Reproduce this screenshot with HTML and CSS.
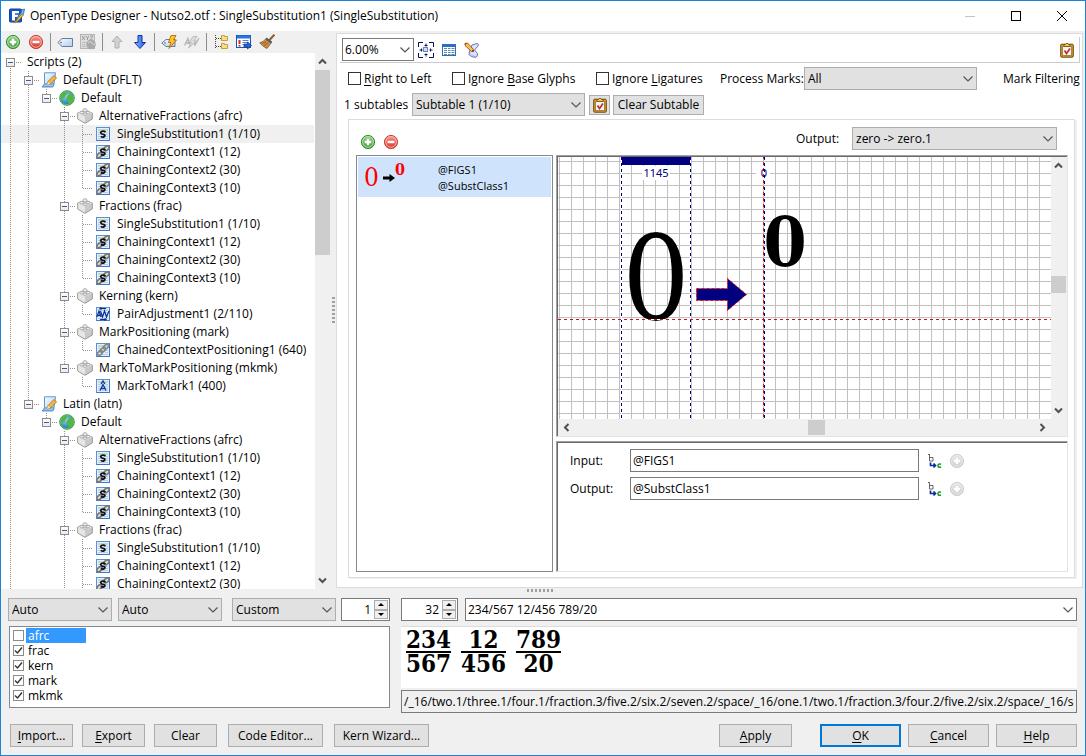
FILE: index.html
```html
<!DOCTYPE html>
<html lang="en">
<head>
<meta charset="utf-8">
<title>OpenType Designer - Nutso2.otf</title>
<link rel="stylesheet" href="styles.css">
</head>
<body>
<svg class="defs" aria-hidden="true">
  <defs>
    <linearGradient id="g-green" x2="0" y2="1"><stop offset="0" stop-color="#9ad48a"/><stop offset="1" stop-color="#3f9a38"/></linearGradient>
    <linearGradient id="g-red" x2="0" y2="1"><stop offset="0" stop-color="#f79a8c"/><stop offset="1" stop-color="#d8342a"/></linearGradient>
    <linearGradient id="g-gray" x2="0" y2="1"><stop offset="0" stop-color="#e6e6e6"/><stop offset="1" stop-color="#cdcdcd"/></linearGradient>
    <linearGradient id="g-blue" x2="1" y2="1"><stop offset="0" stop-color="#fff"/><stop offset="1" stop-color="#a9cdf2"/></linearGradient>
    <linearGradient id="g-arrow" x2="1" y2="0"><stop offset="0" stop-color="#8fc0ff"/><stop offset="1" stop-color="#1d55d8"/></linearGradient>
    <radialGradient id="g-globe" cx=".4" cy=".35"><stop offset="0" stop-color="#9fd8f2"/><stop offset="1" stop-color="#2c86c4"/></radialGradient>
    <symbol id="i-add" viewBox="0 0 16 16"><circle cx="8" cy="8" r="6.6" fill="url(#g-green)" stroke="#3c8c36"/><circle cx="8" cy="8" r="5.3" fill="none" stroke="#c6e8bd" stroke-width=".8"/><path d="M8 4.8v6.4M4.8 8h6.4" stroke="#fff" stroke-width="2.4"/></symbol>
    <symbol id="i-del" viewBox="0 0 16 16"><circle cx="8" cy="8" r="6.6" fill="url(#g-red)" stroke="#cc4137"/><circle cx="8" cy="8" r="5.3" fill="none" stroke="#fac6be" stroke-width=".8"/><path d="M4.6 8h6.8" stroke="#fff" stroke-width="2.4"/></symbol>
    <symbol id="i-add-off" viewBox="0 0 16 16"><circle cx="8" cy="8" r="6.6" fill="url(#g-gray)" stroke="#cfcfcf"/><circle cx="8" cy="8" r="5.3" fill="none" stroke="#eee" stroke-width=".8"/><path d="M8 4.8v6.4M4.8 8h6.4" stroke="#fff" stroke-width="2.4"/></symbol>
    <symbol id="i-tag" viewBox="0 0 16 16"><path d="M5 4.5h10.5v8H5L.8 8.5z" fill="url(#g-blue)" stroke="#6a7c99"/><circle cx="4" cy="8.5" r=".8" fill="#555"/></symbol>
    <symbol id="i-xyz" viewBox="0 0 16 16"><rect x=".5" y=".5" width="14" height="14" fill="#ddd" stroke="#b4b4b4"/><path d="M2 2l3 4M5 2L2 6M6 2l1.500 2L9 2M7.500 4v2M10 2h3l-3 4h3" fill="none" stroke="#999" stroke-width=".9"/><path d="M2 8.500h4M2 10.500h3M2 12.500h4" stroke="#bbb"/><circle cx="11" cy="10.500" r="4.800" fill="#aaa"/><path d="M8 9q3-3 4 0t3 1" stroke="#ddd" fill="none"/></symbol>
    <symbol id="i-up" viewBox="0 0 16 16"><path d="M8 2l5 5.500h-3V14H6V7.500H3z" fill="#d2d2d2" stroke="#b2b2b2"/></symbol>
    <symbol id="i-down" viewBox="0 0 16 16"><path d="M8 14.500L2.500 8.500H6V1.500h4v7h3.500z" fill="url(#g-arrow)" stroke="#0c35a4"/></symbol>
    <symbol id="i-tagbolt" viewBox="0 0 16 16"><path d="M5 5.500h9v7H5L.8 9z" fill="url(#g-blue)" stroke="#6a7c99"/><circle cx="4" cy="9" r=".8" fill="#555"/><path d="M10 1.500h5L12.500 6h3L8 14.500l2-6H7.500z" fill="#ffc62e" stroke="#b76a00" stroke-width=".9"/></symbol>
    <symbol id="i-avbolt" viewBox="0 0 16 16"><path d="M.6 11.500L4 4.500l1.500 6M2 9h4M9 4l2 7 4-7" fill="none" stroke="#b4b4b4" stroke-width="1.300"/><path d="M9 2.500h4L10 7h2.500L4.500 14l3-5.500H5z" fill="#ddd" stroke="#b0b0b0" stroke-width=".8"/></symbol>
    <symbol id="i-hier" viewBox="0 0 16 16"><path d="M2.500 1v13M3 4.500h5M3 12.500h5" stroke="#444" stroke-dasharray="1 1"/><path d="M8.500 1.500h3v1h3v4h-6zM8.500 9.500h3v1h3v4h-6z" fill="#f7dc8a" stroke="#c49d3e"/></symbol>
    <symbol id="i-report" viewBox="0 0 16 16"><rect x=".5" y="1.500" width="14" height="12" fill="#fff" stroke="#1555b4"/><path d="M1 3h13.500" stroke="#2874e0" stroke-width="3"/><path d="M3.500 6v4M3.500 11v1.500" stroke="#e02a1b" stroke-width="2"/><path d="M6.500 6.500h6M6.500 8.500h6M6.500 10.500h3" stroke="#4a85d8"/><path d="M8 10h3.500V8l4 3.500-4 3.500v-2H8z" fill="#2b61d6" stroke="#0b3490" stroke-width=".7"/></symbol>
    <symbol id="i-broom" viewBox="0 0 16 16"><path d="M15.300.7L10.500 6" stroke="#9a5a1c" stroke-width="2"/><path d="M7 4.500l5.500 4-4.500 6Q4 13 .7 8.800 5 8 7 4.500z" fill="#c98d43" stroke="#8a5620" stroke-width=".8"/><path d="M7 4.500l5.500 4" stroke="#57606a" stroke-width="2.200"/><path d="M3 9.500l4-1.500M5 11.500L9 9" stroke="#8a5620" stroke-width=".8"/></symbol>
    <symbol id="i-script" viewBox="0 0 16 16"><path d="M3.500.8h11l-1.500 11-1 3H1q2-1 2.500-3z" fill="url(#g-blue)" stroke="#5b96d8"/><path d="M1 14.800h10.500q1.500-1 1.500-3H3.500q-.5 2-2.500 3z" fill="#9cc7f4" stroke="#4a85cc" stroke-width=".8"/><path d="M6 13l1-3.500 6-6 2.500 2.500-6 6z" fill="#f5b646" stroke="#a6691a" stroke-width=".8"/><path d="M6 13l1-3.200 2.300 2.300z" fill="#f6e2c0"/></symbol>
    <symbol id="i-globe" viewBox="0 0 16 16"><circle cx="8" cy="8" r="7.300" fill="url(#g-globe)" stroke="#3b9b42"/><path d="M2 5q2-4 6-3.500 1 2-1 3.500L5.500 8 3 8.500 1.500 11Q.5 8 2 5zM9.500 5l4-1.500q1.800 3 1.200 6L12 13l-2.500 1.500L9 11 7 9l1-2z" fill="#52b548"/><circle cx="8" cy="8" r="6.600" fill="none" stroke="#62ba5c"/></symbol>
    <symbol id="i-brick" viewBox="0 0 16 16"><path d="M.7 5l7-2.500L15.300 5v6L8 15.300.7 11z" fill="#c9c9c9" stroke="#999"/><path d="M1.200 5.500L8 8.500v6L1.200 10.800z" fill="#e6e6e6"/><path d="M1 5l7-2.500L15 5 8 8.300z" fill="#f8f8f8"/><ellipse cx="4.800" cy="4.600" rx="2" ry="1.300" fill="#eee" stroke="#999" stroke-width=".8"/><ellipse cx="11" cy="4.600" rx="2" ry="1.300" fill="#eee" stroke="#999" stroke-width=".8"/><ellipse cx="8" cy="6.200" rx="2" ry="1.200" fill="#eee" stroke="#999" stroke-width=".8"/><path d="M6 2.200q0-1.500 2-1.500t2 1.500v1.500H6z" fill="#eee" stroke="#999" stroke-width=".8"/></symbol>
    <symbol id="i-page" viewBox="0 0 14 14"><rect x=".5" y=".5" width="13" height="13" fill="#e3effd" stroke="#5f8fd0"/><path d="M2 3h10" stroke="#9bc88e" stroke-width="1"/><path d="M2 5.500h3M2 7.500h3M2 9.500h3M9 5.500h3M9 7.500h3M9 9.500h3M2 11.500h10" stroke="#b5cdea"/><path d="M.5 13.500h13V.500" fill="none" stroke="#3f78c2"/></symbol>
    <symbol id="i-sub" viewBox="0 0 14 14"><use href="#i-page"/><path d="M9.500 5Q7.500 3.500 5.500 4.500T6 7l2 .6q2 1-.2 2.300-1.500.6-3-.6" fill="none" stroke="#111" stroke-width="1.700"/></symbol>
    <symbol id="i-chain" viewBox="0 0 14 14"><use href="#i-page"/><g fill="#ddd" stroke="#777" stroke-width="1.700"><ellipse cx="10.500" cy="3.400" rx="3" ry="1.900" transform="rotate(-40 10.500 3.400)"/><ellipse cx="3.500" cy="10.300" rx="3" ry="1.900" transform="rotate(-40 3.500 10.300)"/></g><path d="M9.500 5Q7.500 3.500 5.500 4.500T6 7l2 .6q2 1-.2 2.300-1.500.6-3-.6" fill="none" stroke="#111" stroke-width="1.700"/></symbol>
    <symbol id="i-chainpos" viewBox="0 0 14 14"><use href="#i-page"/><g fill="none" stroke="#858585" stroke-width="1.600"><ellipse cx="10" cy="3.800" rx="3" ry="1.800" transform="rotate(-42 10 3.800)"/><ellipse cx="7" cy="6.800" rx="3" ry="1.800" transform="rotate(-42 7 6.800)"/><ellipse cx="4" cy="10" rx="3" ry="1.800" transform="rotate(-42 4 10)"/></g></symbol>
    <symbol id="i-pair" viewBox="0 0 14 14"><use href="#i-page"/><path d="M.8 10L3 4l2 6M1.500 8.300h3M4.500 4l2 6 2-6 2 6 2.500-6M4 1.500h6M5.500.500L4 1.500l1.500 1M4 12.500h6M8.500 11.500l1.500 1-1.500 1" fill="none" stroke="#0b2f9c" stroke-width="1.200"/></symbol>
    <symbol id="i-mkmk" viewBox="0 0 14 14"><use href="#i-page"/><path d="M5 5l2-3 2 3M4 11.500L7 5.500l3 6M5 9.500h4" fill="none" stroke="#12358e" stroke-width="1.300"/></symbol>
    <symbol id="i-fit" viewBox="0 0 16 16"><path d="M.5 5V.500H5M11 .5h4.500V5M15.500 11v4.500H11M5 15.500H.500V11" fill="none" stroke="#0b0b54"/><rect x="5.500" y="5.500" width="4" height="4" fill="#cfdff2" stroke="#7088a8"/><path d="M8 1.500v3M8 11.500v3M1.500 8h3M11.500 8h3M6.500 3.500h3M6.500 12.500h3M3.500 6.500v3M12.500 6.500v3" stroke="#0c0c80"/></symbol>
    <symbol id="i-table" viewBox="0 0 16 16"><rect x="1.500" y="2.500" width="13" height="11" fill="#fff" stroke="#2e6db4"/><path d="M1 3.500h14" stroke="#2a6fc4" stroke-width="3"/><path d="M3 6.500h3M7 6.500h2.500M10.500 6.500h3M3 8.500h3M7 8.500h2.500M10.500 8.500h3M3 10.500h3M7 10.500h2.500M10.500 10.500h3M3 12.500h3M7 12.500h2.500M10.500 12.500h3" stroke="#5b86a8"/></symbol>
    <symbol id="i-edit" viewBox="0 0 16 16"><path d="M8 3l5-1.500q2.500.5 1 2.500l-3.500 4 3 3.500q.5 3.500-2 3.800L5 11l1-3z" fill="#dfe2fa" stroke="#6f74c4"/><path d="M6 10.500q-2.500 2 .5 3.500t5 1.200" fill="#cfd3f2" stroke="#6f74c4"/><path d="M1 1.500l2.500-.5 6 6.500-2 2-6.500-6z" fill="#f8c63c" stroke="#8d3b12" stroke-width=".8"/><path d="M.8 1l2 .2L1.500 3z" fill="#c01818"/><path d="M7.500 9.500l2-2 .5 2.500z" fill="#333"/></symbol>
    <symbol id="i-clip" viewBox="0 0 16 16"><rect x="1.700" y="2.200" width="12.600" height="13" rx="1" fill="#d79b25" stroke="#6e4a08"/><path d="M3.500 4.500h9v9h-9z" fill="#eef3fc" stroke="#8a6a2a" stroke-width=".7"/><path d="M5 4.500V2.500h1.500Q8-.5 9.500 2.500H11v2z" fill="#f0cc58" stroke="#6e4a08" stroke-width=".8"/><path d="M5.500 8.500l2 3 3.500-5" fill="none" stroke="#d1261a" stroke-width="1.600"/></symbol>
    <symbol id="i-bc" viewBox="0 0 14 16"><path d="M0 1.500h2M1.500 1v7M1.500 4.500h3.500v3.500H1.500" fill="none" stroke="#666"/><path d="M2.500 9.500v3H7M5.500 10.500l2 2-2 2" fill="none" stroke="#0a2ea0" stroke-width="1.700"/><path d="M13 11.300q-3-1-3 1.400t3 1.300" fill="none" stroke="#149a1e" stroke-width="1.500"/></symbol>
    <symbol id="i-app" viewBox="0 0 16 16"><rect x=".5" y="1" width="12" height="13" rx="1" fill="#1756c8" stroke="#0f3f98"/><path d="M3 3h7v2.300H6v1.500h3.300V9H6v3.500H3z" fill="#fff"/><path d="M15.500 1l-1 5-5 5-2 .500.500-2 4-4.500.500-3z" fill="#73b8f0" stroke="#1c67ad" stroke-width=".8"/><path d="M9 10l4-4 1.500 1L10 12q-4 4-6 2.500Q8 13 9 10z" fill="#f0c33a" stroke="#8b6710" stroke-width=".7"/></symbol>
    <symbol id="a-up" viewBox="0 0 9 9"><path d="M1 6.500L4.500 3 8 6.500" fill="none" stroke="#505050" stroke-width="2"/></symbol>
    <symbol id="a-down" viewBox="0 0 9 9"><path d="M1 2.500L4.500 6 8 2.500" fill="none" stroke="#505050" stroke-width="2"/></symbol>
    <symbol id="a-left" viewBox="0 0 9 9"><path d="M6.500 1L3 4.500 6.500 8" fill="none" stroke="#505050" stroke-width="2"/></symbol>
    <symbol id="a-right" viewBox="0 0 9 9"><path d="M2.500 1L6 4.500 2.500 8" fill="none" stroke="#505050" stroke-width="2"/></symbol>
  </defs>
</svg>

<div class="window">
  <header class="titlebar">
    <svg class="icon"><use href="#i-app"/></svg>
    <span class="title">OpenType Designer - Nutso2.otf : SingleSubstitution1 (SingleSubstitution)</span>
    <button class="caption" aria-label="Minimize" disabled><svg viewBox="0 0 12 12"><path d="M1 6.500h10" stroke="#c4c4c4"/></svg></button>
    <button class="caption" aria-label="Maximize"><svg viewBox="0 0 12 12"><rect x="1.500" y="1.500" width="9" height="9" fill="none" stroke="#000"/></svg></button>
    <button class="caption" aria-label="Close"><svg viewBox="0 0 12 12"><path d="M1 1l10 10M11 1L1 11" stroke="#000"/></svg></button>
  </header>

  <main class="workspace">
    <section class="sidebar">
      <div class="toolbar">
        <button class="tool" aria-label="Add"><svg class="icon"><use href="#i-add"/></svg></button>
        <button class="tool" aria-label="Remove"><svg class="icon"><use href="#i-del"/></svg></button>
        <span class="sep"></span>
        <button class="tool" aria-label="Tag"><svg class="icon"><use href="#i-tag"/></svg></button>
        <button class="tool" aria-label="Rename" disabled><svg class="icon"><use href="#i-xyz"/></svg></button>
        <span class="sep"></span>
        <button class="tool" aria-label="Move up" disabled><svg class="icon"><use href="#i-up"/></svg></button>
        <button class="tool" aria-label="Move down"><svg class="icon"><use href="#i-down"/></svg></button>
        <span class="sep"></span>
        <button class="tool" aria-label="Auto features"><svg class="icon"><use href="#i-tagbolt"/></svg></button>
        <button class="tool" aria-label="Auto kerning" disabled><svg class="icon"><use href="#i-avbolt"/></svg></button>
        <span class="sep"></span>
        <button class="tool" aria-label="Expand tree"><svg class="icon"><use href="#i-hier"/></svg></button>
        <button class="tool" aria-label="Report"><svg class="icon"><use href="#i-report"/></svg></button>
        <button class="tool" aria-label="Clean up"><svg class="icon"><use href="#i-broom"/></svg></button>
      </div>
      <div class="tree-area">
        <ul class="tree">
          <li><div class="row root"><i class="box"></i>Scripts (2)</div>
            <ul>
              <li><div class="row"><i class="box"></i><svg class="icon"><use href="#i-script"/></svg>Default (DFLT)</div>
                <ul>
                  <li><div class="row"><i class="box"></i><svg class="icon"><use href="#i-globe"/></svg>Default</div>
                    <ul>
                      <li><div class="row"><i class="box"></i><svg class="icon"><use href="#i-brick"/></svg>AlternativeFractions (afrc)</div>
                        <ul>
                          <li><div class="row leaf selected"><svg class="icon small"><use href="#i-sub"/></svg>SingleSubstitution1 (1/10)</div></li>
                          <li><div class="row leaf"><svg class="icon small"><use href="#i-chain"/></svg>ChainingContext1 (12)</div></li>
                          <li><div class="row leaf"><svg class="icon small"><use href="#i-chain"/></svg>ChainingContext2 (30)</div></li>
                          <li><div class="row leaf"><svg class="icon small"><use href="#i-chain"/></svg>ChainingContext3 (10)</div></li>
                        </ul>
                      </li>
                      <li><div class="row"><i class="box"></i><svg class="icon"><use href="#i-brick"/></svg>Fractions (frac)</div>
                        <ul>
                          <li><div class="row leaf"><svg class="icon small"><use href="#i-sub"/></svg>SingleSubstitution1 (1/10)</div></li>
                          <li><div class="row leaf"><svg class="icon small"><use href="#i-chain"/></svg>ChainingContext1 (12)</div></li>
                          <li><div class="row leaf"><svg class="icon small"><use href="#i-chain"/></svg>ChainingContext2 (30)</div></li>
                          <li><div class="row leaf"><svg class="icon small"><use href="#i-chain"/></svg>ChainingContext3 (10)</div></li>
                        </ul>
                      </li>
                      <li><div class="row"><i class="box"></i><svg class="icon"><use href="#i-brick"/></svg>Kerning (kern)</div>
                        <ul>
                          <li><div class="row leaf"><svg class="icon small"><use href="#i-pair"/></svg>PairAdjustment1 (2/110)</div></li>
                        </ul>
                      </li>
                      <li><div class="row"><i class="box"></i><svg class="icon"><use href="#i-brick"/></svg>MarkPositioning (mark)</div>
                        <ul>
                          <li><div class="row leaf"><svg class="icon small"><use href="#i-chainpos"/></svg>ChainedContextPositioning1 (640)</div></li>
                        </ul>
                      </li>
                      <li><div class="row"><i class="box"></i><svg class="icon"><use href="#i-brick"/></svg>MarkToMarkPositioning (mkmk)</div>
                        <ul>
                          <li><div class="row leaf"><svg class="icon small"><use href="#i-mkmk"/></svg>MarkToMark1 (400)</div></li>
                        </ul>
                      </li>
                    </ul>
                  </li>
                </ul>
              </li>
              <li><div class="row"><i class="box"></i><svg class="icon"><use href="#i-script"/></svg>Latin (latn)</div>
                <ul>
                  <li><div class="row"><i class="box"></i><svg class="icon"><use href="#i-globe"/></svg>Default</div>
                    <ul>
                      <li><div class="row"><i class="box"></i><svg class="icon"><use href="#i-brick"/></svg>AlternativeFractions (afrc)</div>
                        <ul>
                          <li><div class="row leaf"><svg class="icon small"><use href="#i-sub"/></svg>SingleSubstitution1 (1/10)</div></li>
                          <li><div class="row leaf"><svg class="icon small"><use href="#i-chain"/></svg>ChainingContext1 (12)</div></li>
                          <li><div class="row leaf"><svg class="icon small"><use href="#i-chain"/></svg>ChainingContext2 (30)</div></li>
                          <li><div class="row leaf"><svg class="icon small"><use href="#i-chain"/></svg>ChainingContext3 (10)</div></li>
                        </ul>
                      </li>
                      <li class="more"><div class="row"><i class="box"></i><svg class="icon"><use href="#i-brick"/></svg>Fractions (frac)</div>
                        <ul>
                          <li><div class="row leaf"><svg class="icon small"><use href="#i-sub"/></svg>SingleSubstitution1 (1/10)</div></li>
                          <li><div class="row leaf"><svg class="icon small"><use href="#i-chain"/></svg>ChainingContext1 (12)</div></li>
                          <li class="more"><div class="row leaf"><svg class="icon small"><use href="#i-chain"/></svg>ChainingContext2 (30)</div></li>
                        </ul>
                      </li>
                    </ul>
                  </li>
                </ul>
              </li>
            </ul>
          </li>
        </ul>
        <div class="scroll vertical tree-scroll">
          <svg class="arrow"><use href="#a-up"/></svg><i class="thumb"></i><i class="after"></i><svg class="arrow"><use href="#a-down"/></svg>
        </div>
      </div>
    </section>
    <div class="splitter-v"><i class="grip"></i></div>

    <section class="editor">
      <div class="editor-bar">
        <select class="field zoom" aria-label="Zoom"><option>6.00%</option></select>
        <button class="tool" aria-label="Zoom to fit"><svg class="icon"><use href="#i-fit"/></svg></button>
        <button class="tool" aria-label="Table"><svg class="icon"><use href="#i-table"/></svg></button>
        <button class="tool" aria-label="Edit script"><svg class="icon"><use href="#i-edit"/></svg></button>
        <button class="tool push" aria-label="Validate"><svg class="icon"><use href="#i-clip"/></svg></button>
      </div>
      <div class="flags">
        <label class="check rtl"><input type="checkbox"><span><u>R</u>ight to Left</span></label>
        <label class="check base"><input type="checkbox"><span>Ignore <u>B</u>ase Glyphs</span></label>
        <label class="check liga"><input type="checkbox"><span>Ignore <u>L</u>igatures</span></label>
        <label class="marks-label" for="marks">Process Marks:</label>
        <select class="combo marks" id="marks"><option>All</option></select>
        <span class="filtering">Mark Filtering</span>
      </div>
      <div class="subtables">
        <label class="count" for="subtable">1 subtables</label>
        <select class="combo subtable" id="subtable"><option>Subtable 1 (1/10)</option></select>
        <button class="btn square" aria-label="Validate subtable"><svg class="icon"><use href="#i-clip"/></svg></button>
        <button class="btn clear">Clear Subtable</button>
      </div>
      <div class="group">
        <div class="group-bar">
          <button class="tool" aria-label="Add substitution"><svg class="icon"><use href="#i-add"/></svg></button>
          <button class="tool" aria-label="Remove substitution"><svg class="icon"><use href="#i-del"/></svg></button>
          <label class="out-label" for="out">Output:</label>
          <select class="combo out" id="out"><option>zero -&gt; zero.1</option></select>
        </div>
        <div class="group-body">
          <div class="rules">
            <div class="rule">
              <span class="from">0</span>
              <svg class="mini" viewBox="0 0 12 8"><path d="M0 2.500h6.500V0L12 4 6.500 8V5.500H0z"/></svg>
              <span class="to">0</span>
              <span class="classes">@FIGS1<br>@SubstClass1</span>
            </div>
          </div>
          <div class="detail">
            <div class="canvas sunken">
              <svg class="drawing">
                <defs>
                  <pattern id="grid" x="1" y="4" width="12" height="12" patternUnits="userSpaceOnUse"><path d="M0 .5h12M.5 0v12" stroke="#c0c0c0"/></pattern>
                </defs>
                <rect width="100%" height="100%" fill="url(#grid)"/>
                <rect x="63" width="70" height="8" fill="#000080"/>
                <rect x="84" y="9" width="28" height="14" fill="#fff"/>
                <rect x="198" y="9" width="14" height="14" fill="#fff"/>
                <path d="M63.500 0v600M132.500 0v600" stroke="#fff"/>
                <path d="M63.500 0v600M132.500 0v600" stroke="#000080" stroke-dasharray="3 3"/>
                <path d="M205.500 0v600" stroke="#e01010" stroke-dasharray="3 3" stroke-dashoffset="1"/>
                <path d="M206.500 0v600" stroke="#000080" stroke-dasharray="3 3"/>
                <text class="metric" x="98" y="20">1145</text>
                <text class="metric" x="206" y="20">0</text>
                <text class="glyph" x="98" y="162">0</text>
                <text class="glyph superior" x="227" y="109">0</text>
                <path d="M0 162.500h2000" stroke="#fff"/>
                <path d="M0 162.500h2000" stroke="#c81414" stroke-dasharray="3 3"/>
                <path d="M138.500 131.500h31v-10l19 16-19 16v-10h-31z" fill="#000080" stroke="#f01010" stroke-dasharray="3 2"/>
              </svg>
              <div class="scroll vertical">
                <svg class="arrow"><use href="#a-up"/></svg><i class="before"></i><i class="thumb"></i><i class="after"></i><svg class="arrow"><use href="#a-down"/></svg>
              </div>
              <div class="scroll horizontal">
                <svg class="arrow"><use href="#a-left"/></svg><i class="before"></i><i class="thumb"></i><i class="after"></i><svg class="arrow"><use href="#a-right"/></svg>
              </div>
            </div>
            <div class="mapping sunken">
              <label for="in">Input:</label><input class="field" id="in" value="@FIGS1">
              <button class="tool" aria-label="Pick input"><svg class="icon"><use href="#i-bc"/></svg></button>
              <button class="tool" aria-label="Add input" disabled><svg class="icon"><use href="#i-add-off"/></svg></button>
              <label for="outc">Output:</label><input class="field" id="outc" value="@SubstClass1">
              <button class="tool" aria-label="Pick output"><svg class="icon"><use href="#i-bc"/></svg></button>
              <button class="tool" aria-label="Add output" disabled><svg class="icon"><use href="#i-add-off"/></svg></button>
            </div>
          </div>
        </div>
      </div>
    </section>
  </main>

  <section class="preview">
    <div class="preview-left">
      <div class="controls">
        <select class="combo" aria-label="Script"><option>Auto</option></select>
        <select class="combo" aria-label="Language"><option>Auto</option></select>
        <select class="combo custom" aria-label="Feature set"><option>Custom</option></select>
        <div class="spin narrow"><input aria-label="Alternate" value="1"><span class="steps"><button aria-label="Increase"></button><button class="dec" aria-label="Decrease"></button></span></div>
      </div>
      <div class="features">
        <label class="feature current"><input type="checkbox"><span>afrc</span></label>
        <label class="feature"><input type="checkbox" checked><span>frac</span></label>
        <label class="feature"><input type="checkbox" checked><span>kern</span></label>
        <label class="feature"><input type="checkbox" checked><span>mark</span></label>
        <label class="feature"><input type="checkbox" checked><span>mkmk</span></label>
      </div>
    </div>
    <div class="preview-right">
      <i class="grip flat"></i>
      <div class="controls">
        <div class="spin wide"><input aria-label="Size" value="32"><span class="steps"><button aria-label="Increase"></button><button class="dec" aria-label="Decrease"></button></span></div>
        <select class="field sample" aria-label="Sample text"><option>234/567 12/456 789/20</option></select>
      </div>
      <div class="render">
        <span class="frac"><span>234</span><span>567</span></span>
        <span class="frac"><span>12</span><span>456</span></span>
        <span class="frac"><span>789</span><span>20</span></span>
      </div>
      <input class="names" aria-label="Glyph names" readonly value="/_16/two.1/three.1/four.1/fraction.3/five.2/six.2/seven.2/space/_16/one.1/two.1/fraction.3/four.2/five.2/six.2/space/_16/seven.1/eight.1/nine.1/fraction.3/two.2/zero.2">
    </div>
  </section>

  <footer class="actions">
    <button class="btn s"><u>I</u>mport...</button>
    <button class="btn s"><u>E</u>xport</button>
    <button class="btn s">Clear</button>
    <button class="btn l">Code Editor...</button>
    <button class="btn l">Kern Wizard...</button>
    <span class="fill"></span>
    <button class="btn apply"><u>A</u>pply</button>
    <button class="btn m ok"><u>O</u>K</button>
    <button class="btn m"><u>C</u>ancel</button>
    <button class="btn m"><u>H</u>elp</button>
  </footer>
</div>
</body>
</html>
```
FILE: styles.css
```css
* { box-sizing: border-box; }
body, button, input, select {
  margin: 0;
  font: 12px/16px "Open Sans", "Noto Sans", sans-serif;
  color: #000;
}
.defs { position: absolute; width: 0; height: 0; }
button, input, select { border-radius: 0; outline: 0; }
u { text-underline-offset: 2px; }

.window {
  display: flex;
  flex-direction: column;
  height: 100vh;
  border: 1px solid #1883d7;
  background: #f0f0f0;
  overflow: hidden;
}
.icon { width: 16px; height: 16px; flex: none; display: block; }
.tool { width: 16px; height: 16px; padding: 0; border: 0; background: none; flex: none; }

/* title bar */
.titlebar { display: flex; align-items: center; height: 30px; flex: none; padding-left: 8px; background: #fff; }
.title { flex: 1; padding-left: 5px; white-space: nowrap; }
.caption { width: 46px; height: 28px; padding: 0; border: 0; background: none; }
.caption svg { display: block; width: 12px; height: 12px; margin: 0 auto; }

.workspace { display: flex; flex: 1; min-height: 0; }

/* tree */
.sidebar { display: flex; flex-direction: column; width: 329px; flex: none; }
.toolbar { display: flex; align-items: center; gap: 7px; height: 22px; flex: none; padding-left: 4px; }
.sep { width: 1px; height: 18px; margin: 0 -1px; background: #8c8c8c; }
.tree-area { display: flex; flex: 1; min-height: 0; }
.tree { flex: 1; overflow: hidden; background: #fff; isolation: isolate; }
.tree, .tree ul { margin: 0; padding: 0; list-style: none; }
.tree ul { margin-left: 18px; }
.tree li {
  background: repeating-linear-gradient(#909090 0 1px, transparent 1px 2px) 9px 0 / 1px 100% no-repeat;
}
.tree ul > li:last-child:not(.more) { background-size: 1px 9px; }
.tree > li { background-position: 9px 9px; }
.row {
  position: relative;
  display: flex;
  align-items: center;
  gap: 6px;
  height: 18px;
  padding-left: 5px;
  white-space: nowrap;
}
.box {
  width: 17px;
  height: 9px;
  margin-right: -6px;
  background:
    linear-gradient(#3c5f9c, #3c5f9c) 2px 4px / 5px 1px no-repeat,
    linear-gradient(#8c8c8c, #8c8c8c) 0 0 / 9px 1px no-repeat,
    linear-gradient(#8c8c8c, #8c8c8c) 0 8px / 9px 1px no-repeat,
    linear-gradient(#8c8c8c, #8c8c8c) 0 0 / 1px 9px no-repeat,
    linear-gradient(#8c8c8c, #8c8c8c) 8px 0 / 1px 9px no-repeat,
    linear-gradient(#fff, #e8e8e8) 0 0 / 9px 9px no-repeat,
    repeating-linear-gradient(90deg, #909090 0 1px, transparent 1px 2px) 10px 4px / 5px 1px no-repeat;
}
.root .box { margin-right: -2px; }
.leaf {
  padding-left: 23px;
  gap: 7px;
  background: repeating-linear-gradient(90deg, #909090 0 1px, transparent 1px 2px) 10px 9px / 10px 1px no-repeat;
}
.icon.small { width: 14px; height: 14px; }
.selected::before { content: ""; position: absolute; inset: 0 1px 0 -72px; z-index: -1; background: #f0f0f0; }

/* scroll bars */
.scroll { display: flex; align-items: center; background: #f0f0f0; }
.scroll.vertical { flex-direction: column; width: 15px; }
.scroll.horizontal { height: 17px; }
.arrow { width: 9px; height: 9px; margin: 4px; flex: none; }
.thumb { background: #cdcdcd; flex: none; }
.vertical .thumb { width: 15px; height: 17px; }
.horizontal .thumb { width: 17px; height: 15px; }
.tree-scroll .thumb { height: 185px; }
.after { flex: 17; }
.vertical .before { flex: 16; }
.horizontal .before { flex: 19; }

.splitter-v { display: flex; align-items: center; justify-content: center; width: 6px; flex: none; }
.grip { width: 3px; height: 27px; background: repeating-linear-gradient(#a0a0a0 0 2px, transparent 2px 4px); }
.grip.flat { align-self: flex-start; width: 27px; height: 3px; margin: 0 0 6px 126px; background: repeating-linear-gradient(90deg, #a0a0a0 0 2px, transparent 2px 4px); }

/* editor */
.editor {
  display: flex;
  flex-direction: column;
  flex: 1;
  min-width: 0;
  margin: 2px 2px 1px 0;
  padding: 3px 2px 9px 3px;
  border: 1px solid #dcdcdc;
  background: #fff;
}
.editor-bar {
  display: flex;
  align-items: center;
  gap: 7px;
  height: 26px;
  flex: none;
  padding: 0 4px 0 2px;
  border: 1px solid #ccc;
  border-width: 0 1px 1px 0;
}
.editor-bar .push { margin-left: auto; }
.field, .combo {
  height: 23px;
  padding: 0 4px;
  border: 1px solid #7a7a7a;
  background-color: #fff;
}
select {
  appearance: none;
  background: #fff url('data:image/svg+xml,<svg xmlns="http://www.w3.org/2000/svg" width="10" height="6"><path d="M.5 .5L5 5 9.500 .5" fill="none" stroke="%23555" stroke-width="1.200"/></svg>') right 3px center / 10px 6px no-repeat;
}
select.combo { border-color: #adadad; background-color: #e1e1e1; padding: 0 3px; }
select.zoom { width: 72px; padding: 0 2px; margin-right: -3px; }

.flags { display: flex; align-items: center; height: 23px; flex: none; margin: 4px 0 3px; white-space: nowrap; overflow: hidden; }
.flags > * { flex: none; }
.check { display: flex; align-items: center; gap: 3px; }
.check input { appearance: none; width: 13px; height: 13px; margin: 0; border: 1px solid #333; background: #fff; }
.rtl { width: 104px; margin-left: 8px; }
.base { width: 144px; }
.liga { width: 124px; }
.marks-label { width: 84px; }
.marks { width: 173px; margin-right: 26px; }

.subtables { display: flex; align-items: center; height: 23px; flex: none; padding-left: 4px; }
.count { width: 68px; }
.subtable { width: 173px; margin-right: 4px; }
.btn { height: 23px; padding: 0; border: 1px solid #adadad; background: #e1e1e1; text-align: center; white-space: nowrap; }
.btn.square { display: grid; place-items: center; width: 21px; height: 20px; margin-right: 3px; }
.btn.clear { width: 91px; height: 20px; line-height: 16px; }

.group {
  display: flex;
  flex-direction: column;
  flex: 1;
  min-height: 0;
  margin: 3px 5px 0 8px;
  padding: 7px 6px 5px 7px;
  border: 1px solid #dcdcdc;
  box-shadow: 2px 1px 0 #f0f0f0;
}
.group-bar { display: flex; align-items: center; gap: 7px; height: 23px; flex: none; margin-bottom: 5px; padding: 0 11px 0 4px; }
.group-bar .tool { align-self: flex-end; }
.out-label { margin-left: auto; width: 49px; }
.out { width: 205px; }
.group-body { display: flex; gap: 3px; flex: 1; min-height: 0; }
.rules { width: 197px; flex: none; padding: 1px; border: 1px solid #828790; }
.rule { display: flex; align-items: center; height: 40px; padding-left: 6px; background: #cfe3fd; }
.rule .from, .rule .to { font-family: "DejaVu Serif Condensed", "Liberation Serif", serif; color: #f00; }
.rule .from { width: 19px; font-size: 26px; }
.mini { width: 12px; height: 8px; margin-top: 2px; }
.rule .to { width: 43px; margin-top: -14px; font-size: 16px; font-weight: bold; }
.classes { font-size: 11px; margin-top: 2px; }

.detail { display: flex; flex-direction: column; gap: 4px; flex: 1; min-width: 0; }
.sunken {
  padding: 1px 0 0 1px;
  border: 1px solid;
  border-color: #a0a0a0 #e3e3e3 #e3e3e3 #a0a0a0;
  box-shadow: inset 1px 1px 0 #696969;
}
.canvas { display: grid; grid-template: minmax(0, 1fr) 17px / minmax(0, 1fr) 16px; flex: 1; min-height: 0; background: #f0f0f0; }
.drawing { width: 100%; height: 100%; background: #fff; display: block; }
.canvas .before { height: 0; }
.metric { font: 11px "Noto Sans", sans-serif; fill: #000080; text-anchor: middle; }
.glyph { font: 118px "DejaVu Serif Condensed", "Liberation Serif", serif; text-anchor: middle; }
.superior { font-weight: bold; font-size: 69px; }
.mapping {
  display: grid;
  grid-template-columns: 60px 289px 16px 16px;
  grid-auto-rows: 23px;
  align-content: start;
  align-items: center;
  row-gap: 5px;
  height: 131px;
  padding: 7px 13px;
}
.mapping .tool { margin-left: 8px; }
.mapping .tool:nth-of-type(2n) { margin-left: 14px; }
.mapping .field { padding: 0 2px; }

/* preview */
.preview { display: flex; gap: 11px; flex: none; padding: 0 8px 0 7px; }
.preview-left { width: 382px; flex: none; padding-top: 9px; }
.preview-right { flex: 1; min-width: 0; display: flex; flex-direction: column; }
.controls { display: flex; height: 23px; margin-bottom: 5px; }
.controls .combo { width: 104px; margin-right: 6px; }
.controls .custom { margin: 0 5px 0 4px; }
.spin { display: flex; height: 23px; padding: 1px; border: 1px solid #7a7a7a; background: #fff; }
.spin.narrow { width: 49px; }
.spin.wide { width: 57px; margin-right: 7px; }
.spin input { flex: 1; min-width: 0; padding: 0 3px 0 0; border: 0; text-align: right; background: none; }
.steps { display: flex; flex-direction: column; width: 14px; }
.steps button { flex: 1; padding: 0; border: 1px solid #adadad; background: #f0f0f0; display: grid; place-items: center; }
.steps button::before { content: ""; border: 3px solid transparent; border-top: 0; border-bottom-color: #000; }
.steps .dec::before { transform: rotate(180deg); }
.sample { flex: 1; padding: 0 2px; }
.features { height: 82px; margin-left: 1px; padding: 1px 3px; border: 1px solid #828790; background: #fff; }
.feature { display: flex; align-items: center; gap: 2px; width: 73px; height: 15px; }
.feature span { flex: 1; line-height: 15px; padding-left: 2px; }
.current span { background: #3399ff; color: #fff; }
.feature input { appearance: none; width: 11px; height: 11px; margin: 0; border: 1px solid #8c8c8c; background: #fff; }
.feature input:checked { background: #fff url('data:image/svg+xml,<svg xmlns="http://www.w3.org/2000/svg" width="9" height="9"><path d="M1 4.500L3.500 7 8 1.500" fill="none" stroke="%23333" stroke-width="1.400"/></svg>') center no-repeat; }
.render {
  display: flex;
  gap: 10px;
  height: 62px;
  margin-bottom: 2px;
  padding: 2px 5px 0;
  border-top: 1px solid #dcdcdc;
  background: #fff;
  font: bold 24px/22px "DejaVu Serif Condensed", "Liberation Serif", serif;
}
.frac { display: flex; flex-direction: column; align-items: center; width: 45px; }
.frac span:first-child { width: 45px; text-align: center; border-bottom: 2px solid #000; }
.names { height: 23px; padding: 0 2px; border: 1px solid #7a7a7a; background: #f0f0f0; }

/* footer buttons */
.actions { display: flex; flex: none; gap: 7px; padding: 11px 8px 8px 9px; }
.actions .s { width: 63px; margin-right: 2px; }
.actions .l { width: 95px; margin: 0 2px; }
.fill { flex: 1; }
.apply { width: 73px; margin-right: 21px; }
.actions .m { width: 81px; }
.ok { border: 2px solid #0078d7; }
```
